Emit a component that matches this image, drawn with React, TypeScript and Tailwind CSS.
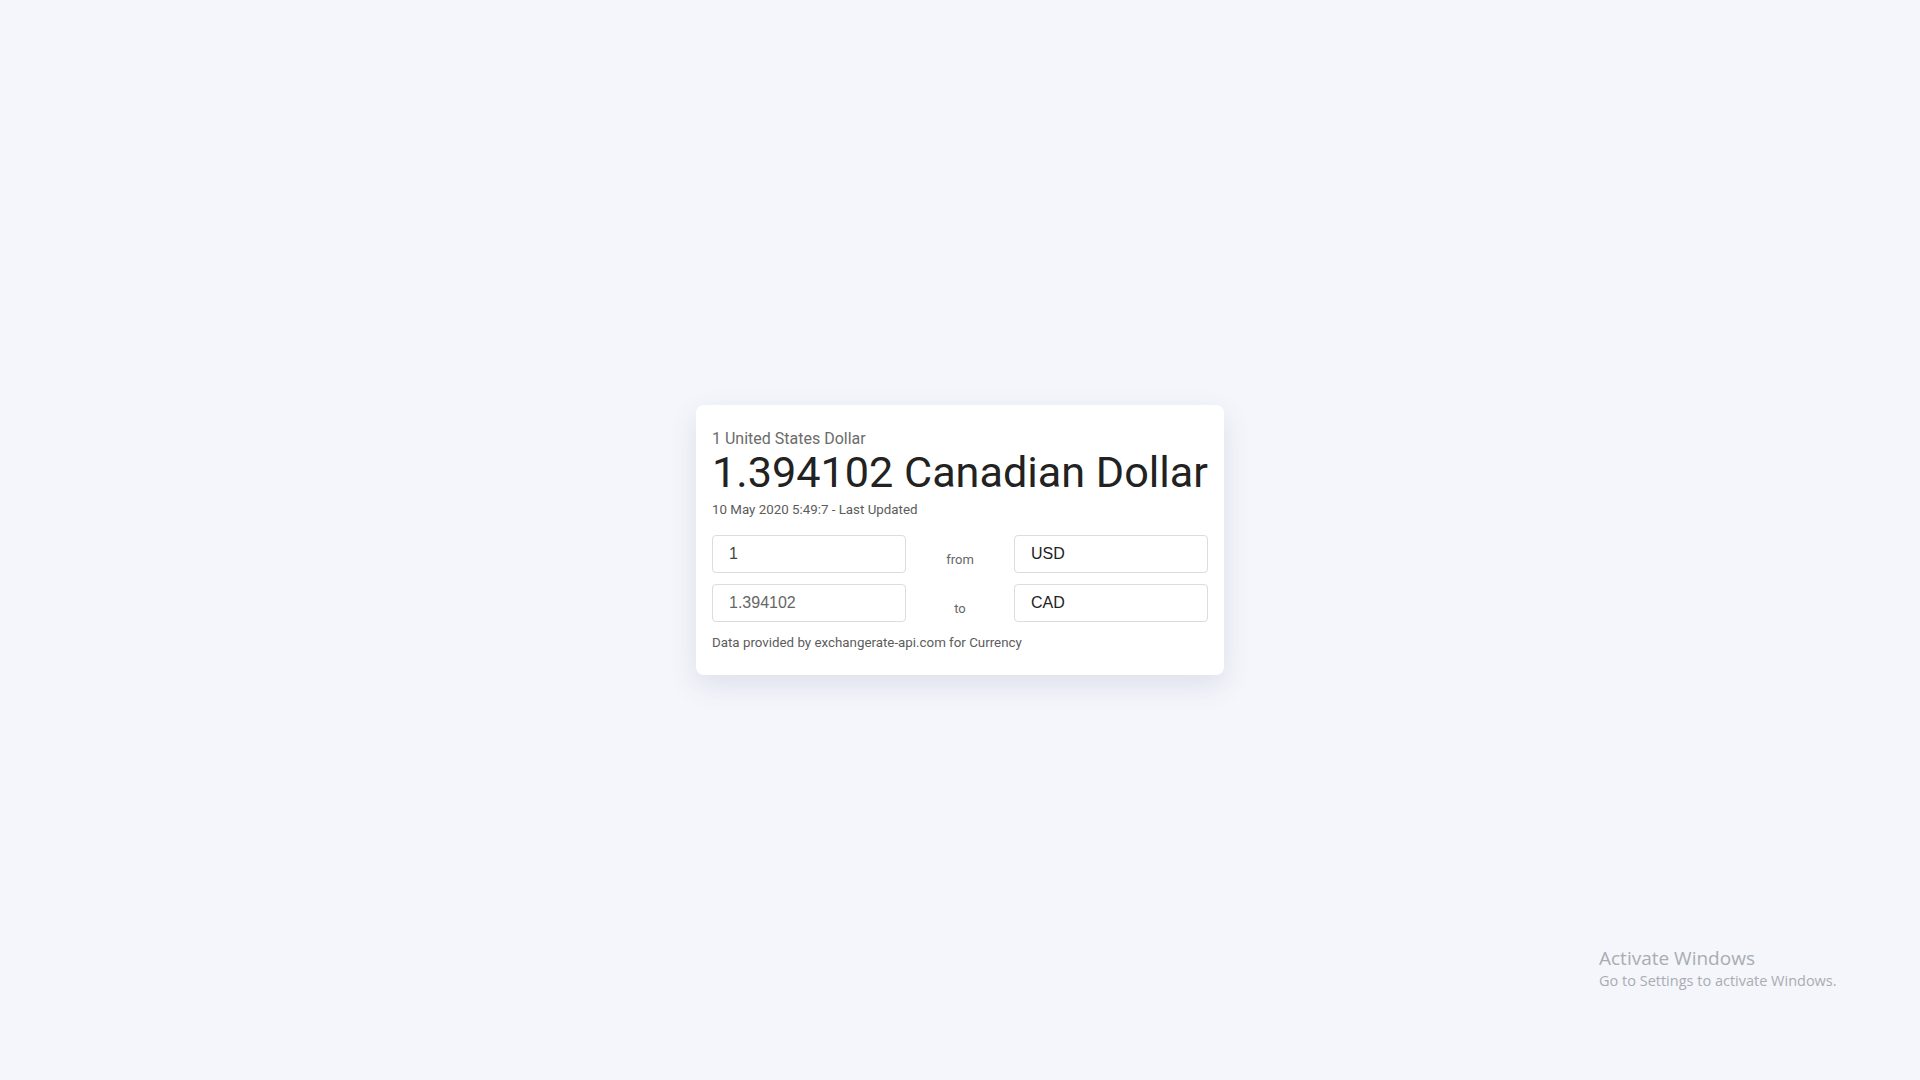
import React from 'react';

// Converter data as shown in the screenshot
const RATE = {
  fromName: 'United States Dollar',
  toName: 'Canadian Dollar',
  amount: '1',
  result: '1.394102',
  from: 'USD',
  to: 'CAD',
  updated: '10 May 2020 5:49:7',
};

export default function App() {
  return (
    <div className="relative flex h-[1080px] w-full items-center justify-center bg-[#f4f6fb] font-['Roboto',sans-serif]">
      <CurrencyCard />

      {/* OS watermark overlay */}
      <div className="pointer-events-none absolute left-[1599px] top-[946px] font-['Open_Sans',sans-serif] text-[#a9acb2]">
        <div className="text-[19px] leading-[24px]">Activate Windows</div>
        <div className="text-[14.5px] leading-[21px]">Go to Settings to activate Windows.</div>
      </div>
    </div>
  );
}

function CurrencyCard() {
  return (
    <div className="w-[528px] rounded-lg bg-white px-4 pt-6 pb-[24px] shadow-[0_10px_28px_rgba(70,80,130,0.13)]">
      <div className="text-[16px] leading-[20px] text-[#6b6b6b]">
        {RATE.amount} {RATE.fromName}
      </div>
      <div className="whitespace-nowrap text-[43.2px] leading-[48px] text-[#222]">
        {RATE.result} {RATE.toName}
      </div>
      <div className="mt-[5px] text-[13.33px] leading-[16px] text-[#5c5c5c]">
        {RATE.updated} - Last Updated
      </div>

      {/* Inputs */}
      <div className="mt-[17px] grid grid-cols-[194px_1fr_194px] gap-y-[11px]">
        <Field value={RATE.amount} className="text-[#444]" />
        <Label text="from" />
        <Field value={RATE.from} className="text-[#222]" />
        <Field value={RATE.result} className="text-[#666]" />
        <Label text="to" />
        <Field value={RATE.to} className="text-[#222]" />
      </div>

      <div className="mt-[13px] text-[13.33px] leading-[16px] text-[#5c5c5c]">
        Data provided by exchangerate-api.com for Currency
      </div>
    </div>
  );
}

function Field({ value, className }: { value: string; className?: string }) {
  return (
    <div
      className={`flex h-[38px] items-center rounded-[4px] border border-[#dcdcdc] px-4 font-['Liberation_Sans',sans-serif] text-[16px] ${className ?? ''}`}
    >
      {value}
    </div>
  );
}

function Label({ text }: { text: string }) {
  return (
    <div className="flex items-center justify-center pt-3 text-[13px] text-[#666]">{text}</div>
  );
}
